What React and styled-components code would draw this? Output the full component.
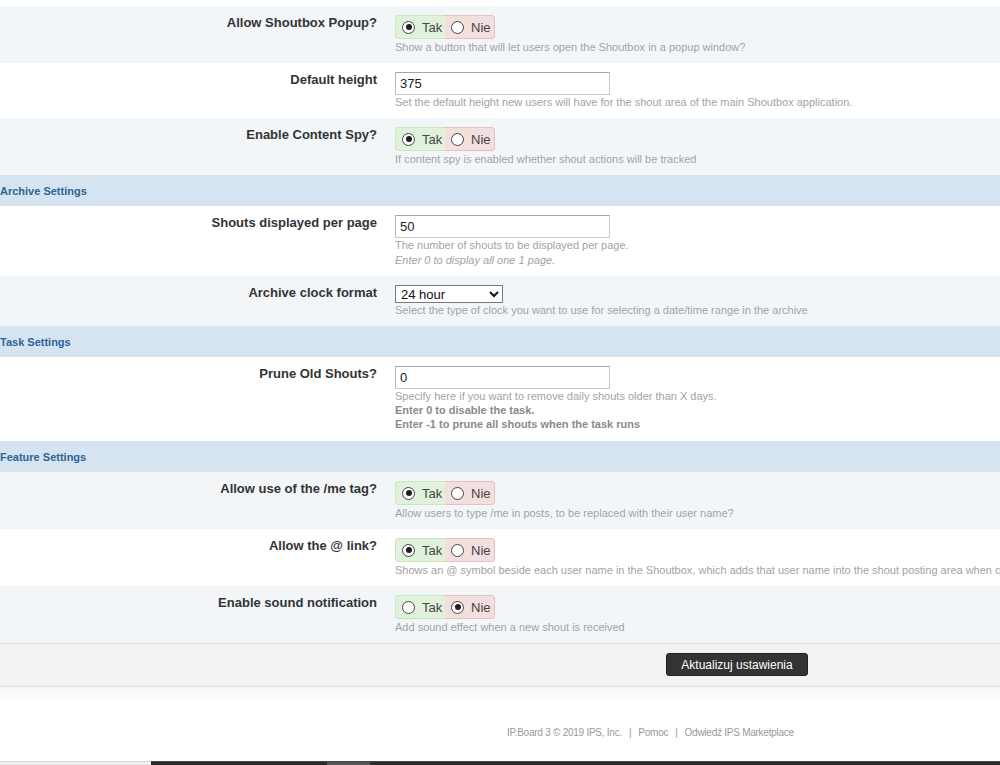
import React from "react";
import styled, { createGlobalStyle } from "styled-components";

const GlobalStyle = createGlobalStyle`
  html, body {
    margin: 0;
    padding: 0;
    background: #fff;
    overflow: hidden;
  }
  body {
    font-family: "Liberation Sans", Arial, sans-serif;
    color: #333;
  }
`;

const settings = [
  {
    label: "Allow Shoutbox Popup?",
    control: "toggle",
    value: true,
    desc: ["Show a button that will let users open the Shoutbox in a popup window?"],
  },
  {
    label: "Default height",
    control: "text",
    value: "375",
    desc: ["Set the default height new users will have for the shout area of the main Shoutbox application."],
  },
  {
    label: "Enable Content Spy?",
    control: "toggle",
    value: true,
    desc: ["If content spy is enabled whether shout actions will be tracked"],
  },
  { type: "section", title: "Archive Settings" },
  {
    label: "Shouts displayed per page",
    control: "text",
    value: "50",
    desc: ["The number of shouts to be displayed per page."],
    italic: "Enter 0 to display all one 1 page.",
  },
  {
    label: "Archive clock format",
    control: "select",
    value: "24 hour",
    desc: ["Select the type of clock you want to use for selecting a date/time range in the archive"],
  },
  { type: "section", title: "Task Settings" },
  {
    label: "Prune Old Shouts?",
    control: "text",
    value: "0",
    desc: ["Specify here if you want to remove daily shouts older than X days."],
    strong: ["Enter 0 to disable the task.", "Enter -1 to prune all shouts when the task runs"],
  },
  { type: "section", title: "Feature Settings" },
  {
    label: "Allow use of the /me tag?",
    control: "toggle",
    value: true,
    desc: ["Allow users to type /me in posts, to be replaced with their user name?"],
  },
  {
    label: "Allow the @ link?",
    control: "toggle",
    value: true,
    desc: ["Shows an @ symbol beside each user name in the Shoutbox, which adds that user name into the shout posting area when clicked."],
  },
  {
    label: "Enable sound notification",
    control: "toggle",
    value: false,
    desc: ["Add sound effect when a new shout is received"],
  },
];

function YesNo({ value }) {
  return (
    <Toggle>
      <ToggleOption $tone="yes">
        <RadioDot $checked={value} />
        Tak
      </ToggleOption>
      <ToggleOption $tone="no">
        <RadioDot $checked={!value} />
        Nie
      </ToggleOption>
    </Toggle>
  );
}

function Control({ item }) {
  if (item.control === "toggle") return <YesNo value={item.value} />;
  if (item.control === "select")
    return (
      <Select defaultValue={item.value}>
        <option>12 hour</option>
        <option>24 hour</option>
      </Select>
    );
  return <TextInput defaultValue={item.value} />;
}

export default function App() {
  let stripe = 0;
  return (
    <Page>
      <GlobalStyle />
      <TopGap />
      {settings.map((item, i) => {
        if (item.type === "section") {
          return <SectionHeader key={i}>{item.title}</SectionHeader>;
        }
        stripe += 1;
        return (
          <Row key={i} $alt={stripe % 2 === 1}>
            <Label>{item.label}</Label>
            <Field>
              <Control item={item} />
              {item.desc.map((d) => (
                <Desc key={d}>{d}</Desc>
              ))}
              {item.italic && <Desc $italic>{item.italic}</Desc>}
              {item.strong?.map((s) => (
                <Desc key={s} $strong>
                  {s}
                </Desc>
              ))}
            </Field>
          </Row>
        );
      })}
      <SubmitBar>
        <SubmitButton type="button">Aktualizuj ustawienia</SubmitButton>
      </SubmitBar>
      <BarShade />
      <Copyright>
        IP.Board 3 © 2019 IPS, Inc.<Sep>|</Sep>Pomoc<Sep>|</Sep>Odwiedź IPS Marketplace
      </Copyright>
      <BottomStrip>
        <StripLight />
        <StripDark>
          <StripTab />
        </StripDark>
      </BottomStrip>
    </Page>
  );
}

const Page = styled.div`
  width: 1000px;
  height: 765px;
  overflow: hidden;
  display: flex;
  flex-direction: column;
`;

const TopGap = styled.div`
  height: 6px;
  flex: none;
`;

const SectionHeader = styled.div`
  height: 31px;
  flex: none;
  display: flex;
  align-items: center;
  padding-left: 0;
  background: #d6e3f0;
  color: #2c6596;
  font-size: 11px;
  font-weight: bold;
`;

const Row = styled.div`
  flex: none;
  display: grid;
  grid-template-columns: 385px 1fr;
  background: ${(p) => (p.$alt ? "#f3f6f9" : "#fff")};
`;

const Label = styled.div`
  padding: 9px 8px 0 0;
  text-align: right;
  font-size: 13px;
  line-height: 16px;
  font-weight: bold;
  color: #333;
`;

const Field = styled.div`
  padding: 9px 0 9px 10px;
  white-space: nowrap;
  min-width: 0;
`;

const Desc = styled.div`
  font-size: 11px;
  line-height: 14px;
  margin-top: ${(p) => (p.$italic ? "1px" : "0")};
  color: ${(p) => (p.$strong ? "#8a8a8a" : "#a3a3a3")};
  font-weight: ${(p) => (p.$strong ? "bold" : "normal")};
  font-style: ${(p) => (p.$italic ? "italic" : "normal")};
  &:last-child {
    margin-bottom: ${(p) => (p.$strong ? "1px" : "0")};
  }
`;

const Toggle = styled.div`
  display: inline-flex;
  vertical-align: top;
  height: 24px;
  margin-bottom: 1px;
`;

const ToggleOption = styled.label`
  display: flex;
  align-items: center;
  gap: 7px;
  width: 50px;
  box-sizing: border-box;
  padding-left: 6px;
  font-size: 13px;
  color: #444;
  background: ${(p) => (p.$tone === "yes" ? "#e1f2dc" : "#f4dfdf")};
  border: 1px solid ${(p) => (p.$tone === "yes" ? "#c9e6bf" : "#e8c0c0")};
  border-radius: ${(p) => (p.$tone === "yes" ? "4px 0 0 4px" : "0 4px 4px 0")};
  ${(p) => (p.$tone === "yes" ? "border-right: none;" : "border-left: none;")}
`;

const RadioDot = styled.span`
  width: 13px;
  height: 13px;
  box-sizing: border-box;
  border-radius: 50%;
  border: 1px solid #444;
  background: #fff;
  display: flex;
  align-items: center;
  justify-content: center;
  flex: none;
  &::after {
    content: "";
    width: 6px;
    height: 6px;
    border-radius: 50%;
    background: #1e1e1e;
    display: ${(p) => (p.$checked ? "block" : "none")};
  }
`;

const TextInput = styled.input`
  display: block;
  width: 215px;
  height: 23px;
  box-sizing: border-box;
  margin: 0;
  padding: 0 4px;
  border: 1px solid #c8c8c8;
  border-top-color: #a6a6a6;
  border-left-color: #b8b8b8;
  font-family: "Liberation Sans", Arial, sans-serif;
  font-size: 13px;
  color: #222;
  background: #fff;
  outline: none;
`;

const Select = styled.select`
  display: block;
  width: 108px;
  height: 18px;
  box-sizing: border-box;
  margin: 0;
  padding: 0 0 0 1px;
  border: 1px solid #7a7a7a;
  border-radius: 0;
  font-family: "Liberation Sans", Arial, sans-serif;
  font-size: 13px;
  color: #111;
  background: #fff;
`;

const SubmitBar = styled.div`
  flex: none;
  height: 41px;
  display: flex;
  align-items: center;
  padding-left: 666px;
  background: #f3f3f3;
  border-top: 1px solid #dadada;
  border-bottom: 2px solid #e2e8ed;
`;

const SubmitButton = styled.button`
  width: 142px;
  height: 23px;
  padding: 0;
  border: 1px solid #222;
  border-radius: 3px;
  background: #333;
  color: #fff;
  font-family: "Liberation Sans", Arial, sans-serif;
  font-size: 12px;
`;

const BarShade = styled.div`
  flex: none;
  height: 14px;
  background: linear-gradient(#f2f5f8, #fff);
`;

const Copyright = styled.div`
  flex: 1;
  padding: 25px 0 0 507px;
  font-size: 10px;
  letter-spacing: -0.25px;
  color: #999;
  line-height: 14px;
`;

const Sep = styled.span`
  margin: 0 7px;
`;

const BottomStrip = styled.div`
  flex: none;
  height: 4px;
  display: flex;
`;

const StripLight = styled.div`
  width: 151px;
  background: #eeeeee;
  border-top: 1px solid #dcdcdc;
`;

const StripDark = styled.div`
  flex: 1;
  background: #2b2b2b;
  border-top: 1px solid #4a4a4a;
  padding-left: 176px;
`;

const StripTab = styled.div`
  width: 43px;
  height: 100%;
  background: #555;
`;
